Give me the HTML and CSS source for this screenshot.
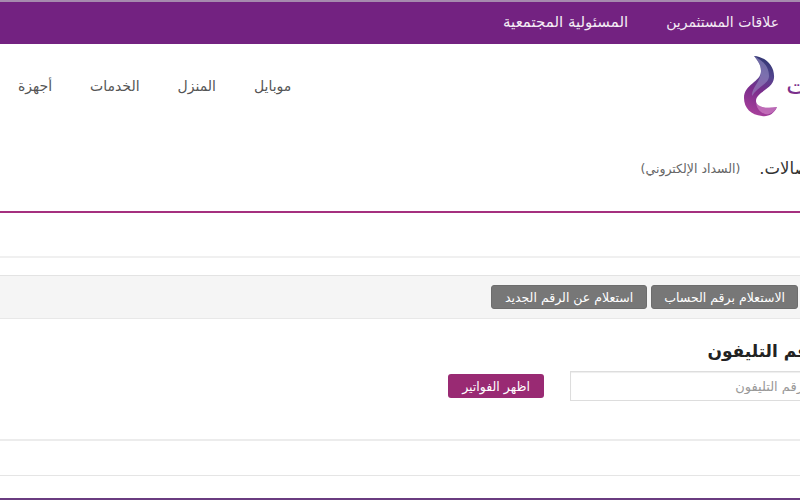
FILE: index.html
```html
<!DOCTYPE html>
<html lang="ar" dir="rtl">
<head>
<meta charset="utf-8">
<title>السداد الإلكتروني</title>
<link rel="stylesheet" href="styles.css">
</head>
<body>
<div class="page">
  <header class="topbar">
    <a class="toplink">علاقات المستثمرين</a>
    <a class="toplink toplink-wide">المسئولية المجتمعية</a>
  </header>
  <nav class="mainnav">
    <div class="brand">
      <span class="brandtext">اتصالات</span>
      <svg class="logo" width="36" height="64" viewBox="0 0 36 64">
        <defs>
          <linearGradient id="lg" x1="0.6" y1="0" x2="0.4" y2="1">
            <stop offset="0" stop-color="#2f3570"/>
            <stop offset="0.3" stop-color="#54458f"/>
            <stop offset="0.58" stop-color="#7a2d8c"/>
            <stop offset="1" stop-color="#a83f9b"/>
          </linearGradient>
        </defs>
        <path d="M12 2C24 3 33 12 32 24C31 35 14 38 14 47C14 53 24 55 35 53C32 60 26 63 20 62C9 61 2 54 2 44C2 30 19 28 19 17C19 10 15 6 12 2Z" fill="url(#lg)"/>
        <path d="M19 17C19 10 15 6 12 2C19 6 27 11 27 22C27 30 15 33 10 42C9 34 19 28 19 17Z" fill="#9c93c9" opacity="0.55"/>
        <path d="M14 47C14 53 24 55 35 53C32 59 27 61 23 60C17 58 14 53 14 47Z" fill="#d98ccd" opacity="0.6"/>
      </svg>
    </div>
    <ul class="menu">
      <li>موبايل</li>
      <li>المنزل</li>
      <li>الخدمات</li>
      <li>أجهزة</li>
    </ul>
  </nav>
  <section class="titlebar">
    <h1 class="title">اتصالات.</h1>
    <small class="subtitle">(السداد الإلكتروني)</small>
  </section>
  <div class="blank"></div>
  <div class="tabs">
    <button class="tab">الاستعلام برقم الحساب</button>
    <button class="tab tab-new">استعلام عن الرقم الجديد</button>
  </div>
  <section class="formarea">
    <h2 class="formtitle">رقم التليفون</h2>
    <div class="formrow">
      <input class="phone" type="text" placeholder="رقم التليفون">
      <button class="submit">اظهر الفواتير</button>
    </div>
  </section>
  <div class="band"></div>
  <div class="band2"></div>
  <div class="bottomline"></div>
</div>
</body>
</html>
```

FILE: styles.css
```css
* { box-sizing: border-box; }
html, body { margin: 0; padding: 0; width: 800px; height: 500px; overflow: hidden; background: #fff; }
body { font-family: "DejaVu Sans", sans-serif; color: #333; }
.page { width: 800px; height: 500px; display: flex; flex-direction: column; overflow: hidden; }
.topbar { height: 44px; flex: none; background: #732281; border-top: 2px solid #a68aae; display: flex; align-items: center; gap: 38px; padding-right: 21px; padding-bottom: 2px; }
.toplink { color: #f4ecf5; font-size: 14px; }
.toplink-wide { font-size: 15px; }
.mainnav { height: 84px; flex: none; display: flex; align-items: center; justify-content: space-between; padding-left: 18px; }
.brand { display: flex; align-items: center; margin-right: -64px; }
.brandtext { white-space: nowrap; color: #7b2f8c; font-size: 24px; }
.logo { display: block; margin-right: 8px; }
.menu { list-style: none; display: flex; gap: 38px; margin: 0; padding: 0; font-size: 14px; color: #555; }
.titlebar { height: 85px; flex: none; border-bottom: 2px solid #a5307f; display: flex; align-items: center; padding-bottom: 2px; margin-right: -18px; gap: 19px; }
.title { margin: 0; font-size: 16.5px; font-weight: 400; color: #333; white-space: nowrap; }
.subtitle { font-size: 12.5px; color: #666; white-space: nowrap; }
.blank { height: 45px; flex: none; border-bottom: 2px solid #f0f0f0; }
.tabs { height: 44px; margin-top: 17px; flex: none; background: #f5f5f5; border-top: 1px solid #e3e3e3; border-bottom: 1px solid #e8e8e8; display: flex; align-items: center; gap: 4px; padding-right: 2px; }
.tab { height: 24px; border: 1px solid #6d6d6d; border-radius: 3px; background: #777; color: #fff; font: 12.5px "DejaVu Sans", sans-serif; padding: 0 12px; white-space: nowrap; }
.tab-new { padding: 0 13px; }
.formarea { height: 122px; flex: none; border-bottom: 2px solid #ececec; }
.formtitle { margin: 20px -18px 0 0; font-size: 17px; font-weight: 700; color: #222; line-height: 24px; }
.formrow { display: flex; align-items: center; margin-top: 8px; margin-right: -10px; }
.phone { width: 240px; height: 30px; flex: none; border: 1px solid #ddd; background: #fff; padding: 0 6px; font: 13px "DejaVu Sans", sans-serif; box-shadow: inset 0 1px 1px rgba(0,0,0,.07); }
.phone::placeholder { color: #999; }
.submit { height: 24px; width: 96px; margin-right: 26px; border: 0; border-radius: 3px; background: #992a73; color: #fff; font: 12.5px "DejaVu Sans", sans-serif; padding: 0; }
.band { height: 35px; flex: none; border-bottom: 1px solid #e5e5e5; }
.band2 { flex: 1; }
.bottomline { height: 2px; flex: none; background: #6a3c80; }
```
